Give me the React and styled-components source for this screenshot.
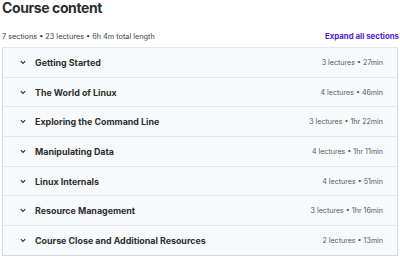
import React from "react";
import styled, { createGlobalStyle } from "styled-components";

const GlobalStyle = createGlobalStyle`
  body {
    margin: 0;
    background: #fff;
    font-family: Inter, "Noto Sans", sans-serif;
    color: #2d2f31;
  }
`;

const sections = [
  { title: "Getting Started", lectures: 3, length: "27min" },
  { title: "The World of Linux", lectures: 4, length: "46min" },
  { title: "Exploring the Command Line", lectures: 3, length: "1hr 22min" },
  { title: "Manipulating Data", lectures: 4, length: "1hr 11min" },
  { title: "Linux Internals", lectures: 4, length: "51min" },
  { title: "Resource Management", lectures: 3, length: "1hr 16min" },
  { title: "Course Close and Additional Resources", lectures: 2, length: "13min" },
];

function Chevron() {
  return (
    <svg width="6" height="5" viewBox="0 0 6 5" fill="none">
      <path d="M0.8 1.2 L3 3.4 L5.2 1.2" stroke="#2d2f31" strokeWidth="1.1" />
    </svg>
  );
}

function App() {
  return (
    <Page>
      <GlobalStyle />
      <Title>Course content</Title>
      <MetaBar>
        <Meta>7 sections • 23 lectures • 6h 4m total length</Meta>
        <ExpandLink>Expand all sections</ExpandLink>
      </MetaBar>
      <List>
        {sections.map((s) => (
          <Row key={s.title}>
            <Left>
              <Chevron />
              <SectionTitle>{s.title}</SectionTitle>
            </Left>
            <Info>
              {s.lectures} lectures • {s.length}
            </Info>
          </Row>
        ))}
      </List>
    </Page>
  );
}

const Page = styled.div`
  width: 400px;
  height: 258px;
  padding: 0 2px;
  box-sizing: border-box;
  overflow: hidden;
`;

const Title = styled.h2`
  margin: 0;
  font-size: 14px;
  font-weight: 700;
  line-height: 16px;
  letter-spacing: -0.4px;
`;

const MetaBar = styled.div`
  display: flex;
  justify-content: space-between;
  align-items: center;
  margin-top: 14px;
  height: 12px;
  margin-bottom: 5px;
`;

const Meta = styled.span`
  font-size: 7.3px;
  color: #3a3d40;
`;

const ExpandLink = styled.span`
  font-size: 7.85px;
  font-weight: 700;
  color: #5624d0;
  margin-right: -1px;
`;

const List = styled.div`
  border: 1px solid #d1d7dc;
  border-top-color: #e4e8eb;
`;

const Row = styled.div`
  display: flex;
  align-items: center;
  justify-content: space-between;
  height: 28.7px;
  background: #f7f9fa;
  padding: 0 14px 0 17px;
  & + & {
    border-top: 1px solid #e4e8eb;
  }
`;

const Left = styled.div`
  display: flex;
  align-items: center;
  gap: 9px;
`;

const SectionTitle = styled.span`
  font-size: 8.9px;
  font-weight: 700;
`;

const Info = styled.span`
  font-size: 7.1px;
  color: #55595d;
`;

export default App;
